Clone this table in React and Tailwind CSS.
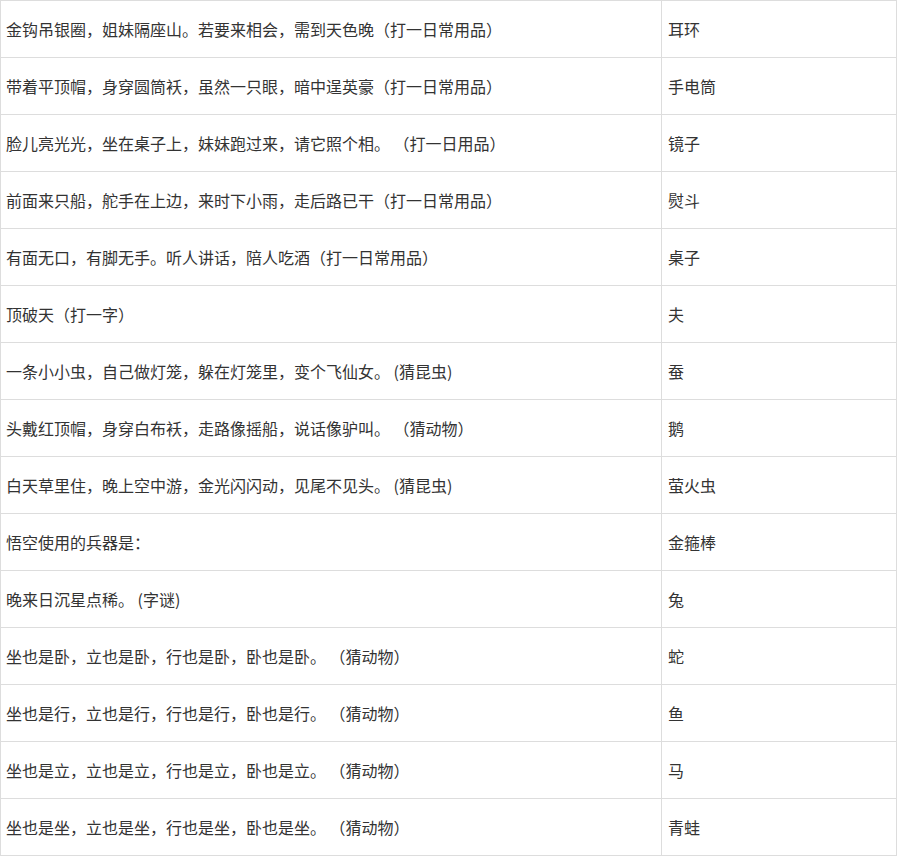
const rows = [
  ["金钩吊银圈，姐妹隔座山。若要来相会，需到天色晚（打一日常用品）", "耳环"],
  ["带着平顶帽，身穿圆筒袄，虽然一只眼，暗中逞英豪（打一日常用品）", "手电筒"],
  ["脸儿亮光光，坐在桌子上，妹妹跑过来，请它照个相。 （打一日用品）", "镜子"],
  ["前面来只船，舵手在上边，来时下小雨，走后路已干（打一日常用品）", "熨斗"],
  ["有面无口，有脚无手。听人讲话，陪人吃酒（打一日常用品）", "桌子"],
  ["顶破天（打一字）", "夫"],
  ["一条小小虫，自己做灯笼，躲在灯笼里，变个飞仙女。 (猜昆虫)", "蚕"],
  ["头戴红顶帽，身穿白布袄，走路像摇船，说话像驴叫。 （猜动物）", "鹅"],
  ["白天草里住，晚上空中游，金光闪闪动，见尾不见头。 (猜昆虫)", "萤火虫"],
  ["悟空使用的兵器是：", "金箍棒"],
  ["晚来日沉星点稀。 (字谜)", "兔"],
  ["坐也是卧，立也是卧，行也是卧，卧也是卧。 （猜动物）", "蛇"],
  ["坐也是行，立也是行，行也是行，卧也是行。 （猜动物）", "鱼"],
  ["坐也是立，立也是立，行也是立，卧也是立。 （猜动物）", "马"],
  ["坐也是坐，立也是坐，行也是坐，卧也是坐。 （猜动物）", "青蛙"],
]

const App = () => {
  return (
    <div className="bg-white min-h-[857px] font-['Noto_Sans_CJK_SC','Noto_Sans',sans-serif] text-[16px] text-[#333]">
      <table className="w-[897px] border-collapse table-fixed">
        <colgroup>
          <col className="w-[661px]" />
          <col />
        </colgroup>
        <tbody>
          {rows.map((r, i) => (
            <tr key={i} className="h-[57px]">
              <td className="border border-[#dddddd] pl-[5px] pb-[1px] align-middle whitespace-nowrap">{r[0]}</td>
              <td className="border border-[#dddddd] pl-[6px] pb-[1px] align-middle">{r[1]}</td>
            </tr>
          ))}
        </tbody>
      </table>
    </div>
  )
}
export default App
